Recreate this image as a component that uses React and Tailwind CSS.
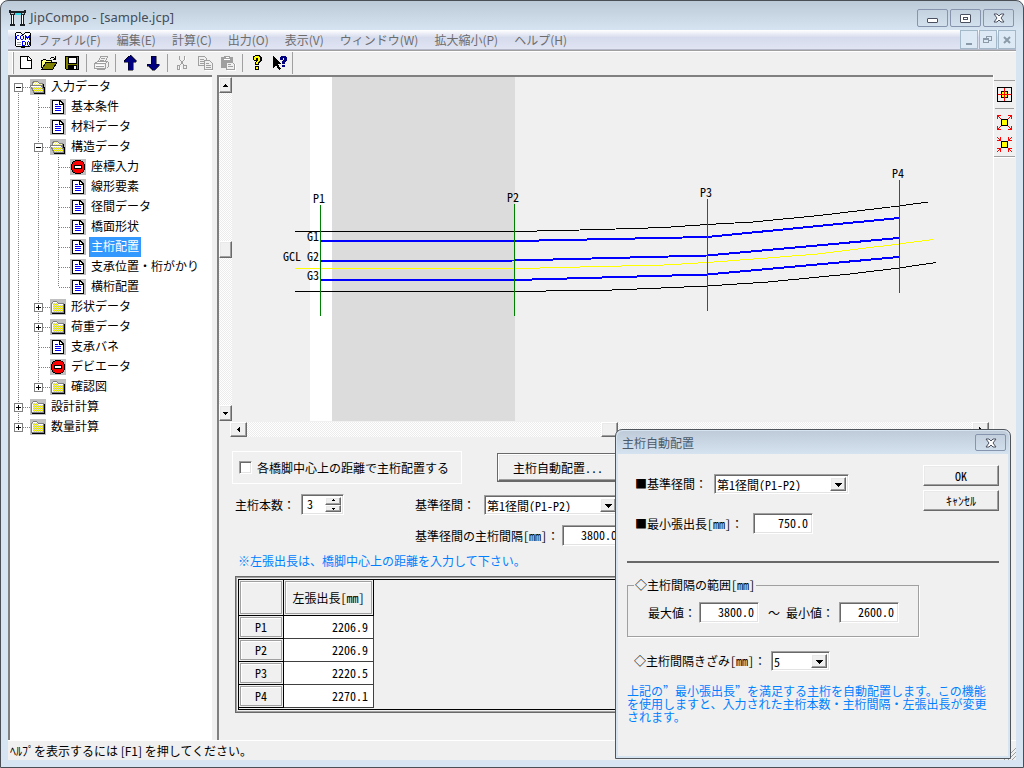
import React, { useState } from "react";

const raised = "border border-t-white border-l-white border-r-[#696969] border-b-[#696969] bg-[#f0f0f0] shadow-[inset_-1px_-1px_#a0a0a0,inset_1px_1px_#e9e9e9]";
const sunken = "border border-t-[#a0a0a0] border-l-[#a0a0a0] border-r-white border-b-white shadow-[inset_1px_1px_#696969,inset_-1px_-1px_#e3e3e3] bg-white";
const track = "bg-[repeating-conic-gradient(#ffffff_0_25%,#ececec_0_50%)] bg-[length:2px_2px]";

const treeRows = [
    { cells: ["box-open-first"], icon: "open", label: "入力データ" },
    { cells: ["v", "t"], icon: "doc", label: "基本条件" },
    { cells: ["v", "t"], icon: "doc", label: "材料データ" },
    { cells: ["v", "box-open"], icon: "open", label: "構造データ" },
    { cells: ["v", "v", "t"], icon: "stop", label: "座標入力" },
    { cells: ["v", "v", "t"], icon: "doc", label: "線形要素" },
    { cells: ["v", "v", "t"], icon: "doc", label: "径間データ" },
    { cells: ["v", "v", "t"], icon: "doc", label: "橋面形状" },
    { cells: ["v", "v", "t"], icon: "doc", label: "主桁配置" },
    { cells: ["v", "v", "t"], icon: "doc", label: "支承位置・桁がかり" },
    { cells: ["v", "v", "l"], icon: "doc", label: "横桁配置" },
    { cells: ["v", "box-closed"], icon: "closed", label: "形状データ" },
    { cells: ["v", "box-closed"], icon: "closed", label: "荷重データ" },
    { cells: ["v", "t"], icon: "doc", label: "支承バネ" },
    { cells: ["v", "t"], icon: "stop", label: "デビエータ" },
    { cells: ["v", "box-closed-last"], icon: "closed", label: "確認図" },
    { cells: ["box-closed"], icon: "closed", label: "設計計算" },
    { cells: ["box-closed-last"], icon: "closed", label: "数量計算" },
];

const menus = ["ファイル(F)", "編集(E)", "計算(C)", "出力(O)", "表示(V)", "ウィンドウ(W)", "拡大縮小(P)", "ヘルプ(H)"];

const piers = [
    { name: "P1", value: "2206.9" },
    { name: "P2", value: "2206.9" },
    { name: "P3", value: "2220.5" },
    { name: "P4", value: "2270.1" },
];

const TreeCell = ({ kind }) => {
    const box = kind.startsWith("box");
    const top = kind !== "box-open-first";
    const bottom = kind !== "l" && !kind.endsWith("last");
    return (
        <svg className="w-5 h-5 shrink-0" viewBox="0 0 20 20" shapeRendering="crispEdges" fill="none" stroke="#808080" strokeDasharray="1 1">
            {top && <path d="M8.5 0V10" />}
            {bottom && <path d="M8.5 10V20" />}
            {kind !== "v" && <path d="M9 10.5H20" />}
            {box && <rect x="4.5" y="6.5" width="8" height="8" fill="#fff" strokeDasharray="none" />}
            {box && <path d="M6 10.5h5" stroke="#000" strokeDasharray="none" />}
            {kind.startsWith("box-closed") && <path d="M8.5 8v5" stroke="#000" strokeDasharray="none" />}
        </svg>
    );
};

const TreeIcon = ({ kind }) => (
    <svg className="w-4 h-4 shrink-0" viewBox="0 0 16 16" shapeRendering="crispEdges">
        <defs>
            <pattern id="dither" width="2" height="2" patternUnits="userSpaceOnUse">
                <rect width="2" height="2" fill="#ffff00" />
                <rect width="1" height="1" fill="#c8c8b0" />
                <rect x="1" y="1" width="1" height="1" fill="#c8c8b0" />
            </pattern>
            <pattern id="ditherLight" width="2" height="2" patternUnits="userSpaceOnUse">
                <rect width="2" height="2" fill="#f4f080" />
                <rect width="1" height="1" fill="#ffffff" />
                <rect x="1" y="1" width="1" height="1" fill="#ffffff" />
            </pattern>
        </defs>
        <rect width="16" height="16" fill="#c0c0c0" />
        {kind === "doc" && (
            <>
                <path d="M2 1h8l4 4v10H2z" fill="#000" />
                <path d="M3 2h6v4h4v8H3z" fill="#fff" />
                <path d="M10 3v2h2v-1h-1v-1z" fill="#fff" />
                <path d="M5 5.5h3M5 7.5h6M5 9.5h6M5 11.5h6" stroke="#0000ff" />
            </>
        )}
        {kind === "closed" && (
            <>
                <path d="M2 14.5h13M14.5 5v10" stroke="#000" />
                <path d="M1 4h1V3h1V2h4v1h1v1h6v10H1z" fill="#808080" />
                <path d="M2 5V4h1V3h4v1h1v1h5v8H2z" fill="url(#dither)" />
                <path d="M2.5 13V4.500M3 3.5h4M8 5.500h5" stroke="#fff" fill="none" />
            </>
        )}
        {kind === "open" && (
            <>
                <path d="M2 6V3h1V2h5v1h1v1h4v3h1v7H4l-1-3z" fill="#808080" />
                <path d="M3 6V4h1V3h4v1h1v1h3v2H3z" fill="url(#ditherLight)" />
                <path d="M0 6h12v2h1v2h1v4H3v-2H2v-2H1V8H0z" fill="#808080" />
                <path d="M1 7h10v1h1v2h1v3H4v-2H3V9H2V8H1z" fill="url(#dither)" />
                <path d="M1 7.5h10" stroke="#fff" />
                <path d="M13.500 5v4M14.500 8v7M4 14.5h11" stroke="#000" />
            </>
        )}
        {kind === "stop" && (
            <>
                <path d="M5 1h6v1h2v1h1v2h1v6h-1v2h-1v1h-2v1H5v-1H3v-1H2v-2H1V5h1V3h1V2h2z" fill="#000" />
                <path d="M5 2h6v1h2v2h1v6h-1v2h-2v1H5v-1H3v-2H2V5h1V3h2z" fill="#ff0000" />
                <rect x="4.500" y="6.500" width="7" height="3" fill="#fff" stroke="#000" />
            </>
        )}
    </svg>
);

const ToolIcon = ({ name }) => (
    <svg className="w-4 h-4" viewBox="0 0 16 16" shapeRendering="crispEdges" fill="none">
        {name === "new" && (
            <>
                <path d="M2.500 1.500h8l3 3v9h-11z" fill="#fff" stroke="#000" />
                <path d="M9.500 2v3.500h4" stroke="#000" />
            </>
        )}
        {name === "open" && (
            <>
                <path d="M1 13V5h1V4h3v1h5v2H5l-3 6z" fill="#ffff80" />
                <path d="M.5 13V5.500h1M1.500 4.500h3M4.500 5.500h6v2" stroke="#000" />
                <path d="M5 7h11l-4 7H1z" fill="#808000" stroke="#000" />
                <path d="M9 3.500h1M10 2.500h3M13 3.500h1M14.500 1v4M12 4.500h3" stroke="#000" />
            </>
        )}
        {name === "save" && (
            <>
                <path d="M1.500 1.500h13v13h-12l-1-1z" fill="#808000" stroke="#000" />
                <path d="M4 2h8v6H4z" fill="#fff" stroke="#000" />
                <path d="M4 10h9v5H4z" fill="#000" />
                <path d="M10 11h2v3h-2z" fill="#fff" />
            </>
        )}
        {name === "print" && (
            <>
                <path d="M5.500 6.500l2-5h7l-2 5M8 3.500h4M7 5.500h4" stroke="#a0a0a0" />
                <path d="M1.500 8.500l3-2h10l1 1v4l-2 2M1.500 8.500h11v5h-11zM12.500 8.500l2-2M3 11.500h8M3.500 14.500h8" stroke="#a0a0a0" />
                <path d="M2 14.500h1M5 7.500h7M3 10.500h8" stroke="#fff" />
            </>
        )}
        {name === "up" && <path d="M8 0h1v1h1v1h1v1h1v1h1v1h1v2h-3v8H6V7H2V5h1V4h1V3h1V2h1V1h2z" fill="#000080" stroke="#000" strokeWidth=".5" />}
        {name === "down" && <path d="M6 1h5v8h3v2h-1v1h-1v1h-1v1h-1v1H7v-1H6v-1H5v-1H4v-1H2V9h4z" fill="#000080" stroke="#000" strokeWidth=".5" />}
        {name === "cut" && (
            <>
                <path d="M5.500 1v3l5 7M10.500 1v3l-5 7" stroke="#a0a0a0" />
                <path d="M3.500 10.500h2v4h-2zM9.500 10.500h3v3h-3z" stroke="#a0a0a0" />
                <path d="M11.500 2v3M6.500 12v3" stroke="#fff" />
            </>
        )}
        {name === "copy" && (
            <>
                <path d="M1.500 1.500h6l2 2v7h-8zM3 4.500h4M3 6.500h4M3 8.500h4" stroke="#a0a0a0" />
                <path d="M7.500 5.500h5l3 3v6h-8z" fill="#f0f0f0" stroke="#a0a0a0" />
                <path d="M9 8.500h3M9 10.500h5M9 12.500h5" stroke="#a0a0a0" />
                <path d="M8 15.500h8" stroke="#fff" />
            </>
        )}
        {name === "paste" && (
            <>
                <path d="M1 2h3V1h6v1h3v11H1z" fill="#a0a0a0" />
                <path d="M4 4.500h6M5.500 2.500h3" stroke="#fff" />
                <path d="M6.500 7.500h6l2 2v5h-8z" fill="#f0f0f0" stroke="#a0a0a0" />
                <path d="M8 9.500h3M8 11.500h5" stroke="#a0a0a0" />
                <path d="M7 15.500h9M15.500 9v6" stroke="#fff" />
            </>
        )}
        {name === "help" && (
            <>
                <path d="M4 1h2V0h5v1h1v1h1v4h-1v1h-1v1h-1v2H6V7h1V6h1V5H8v1H5V5H4z" fill="#000" />
                <path d="M5 2h1V1h4v1h1v4h-1v1H9v2H7V7h1V6h1V3H7v2H5z" fill="#ffff00" />
                <path d="M6 11h4v4H6z" fill="#000" />
                <path d="M7 12h2v2H7z" fill="#ffff00" />
            </>
        )}
        {name === "context" && (
            <>
                <path d="M1 1l8 8H6l3 5-2 1-3-5-3 3z" fill="#000" />
                <path d="M8 2h1V1h5v1h1v4h-1v1h-1v2h-3V6h1V5h1V3h-1v2H8zM10 10h3v2h-3z" fill="#000080" />
            </>
        )}
    </svg>
);

const ToolButton = ({ name, label }) => (
    <button aria-label={label} className="w-[23px] h-[22px] pl-[3px] flex items-center">
        <ToolIcon name={name} />
    </button>
);

const Separator = () => <div className="w-[6px] pl-[2px]"><div className="w-px h-[18px] bg-[#a0a0a0]" /></div>;

const Arrow = ({ d }) => (
    <svg className="w-[7px] h-[7px]" viewBox="0 0 7 7" shapeRendering="crispEdges">
        <path d={d} fill="#000" />
    </svg>
);

const UP = "M3 2h1v1h1v1h1v1H1V4h1V3h1z";
const DOWN = "M1 2h5v1H5v1H4v1H3V4H2V3H1z";
const LEFT = "M4 1h1v5H4V5H3V4H2V3h1V2h1z";
const RIGHT = "M2 1h1v1h1v1h1v1H4v1H3v1H2z";
const DROP = "M0 2h7v1H6v1H5v1H4v1H3V5H2V4H1V3H0z";

// the colon stays full width while the rest of the caption uses half-width latin
const Caption = ({ htmlFor, text, className }) => (
    <label htmlFor={htmlFor} className={"whitespace-nowrap " + className}>
        {text}<span className="[font-feature-settings:normal] [text-spacing-trim:space-all]">：</span>
    </label>
);

const Combo = ({ id, value, className }) => (
    <div className={"flex h-[20px] p-[2px] " + sunken + " " + className}>
        <select id={id} className="appearance-none flex-1 min-w-0 bg-transparent leading-4 outline-none">
            <option>{value}</option>
        </select>
        <span className={"w-4 flex items-center justify-center pointer-events-none " + raised}><Arrow d={DROP} /></span>
    </div>
);

const NumberBox = ({ id, value }) => (
    <input id={id} defaultValue={value} className={"w-[60px] h-[21px] pr-1 pb-[3px] text-right leading-4 outline-none " + sunken} />
);

const CloseGlyph = () => (
    <svg className="w-3 h-[10px]" viewBox="0 0 12 10">
        <path d="M1 1h3l2 2 2-2h3L8 5l3 4H8L6 7 4 9H1l3-4z" fill="#fff" stroke="#4a5060" />
    </svg>
);

const BridgePlan = () => (
    <svg className="w-full h-full" shapeRendering="crispEdges">
        <g transform="translate(-232 -77)" fill="none">
            <rect x="310" y="77" width="22" height="344" fill="#fff" />
            <rect x="332" y="77" width="183" height="344" fill="#dcdcdc" />
            <g stroke="#000">
                <polyline points="295,231.500 515,231.500 560,230.500 600,229.500 664,227.500 707,224.500 753,222 819,215.500 899,206 928,202" />
                <polyline points="295,291.500 515,291.500 566,290.700 600,290.500 650,288.500 707,286 768,282 850,274 899,268 936,262.500" />
            </g>
            <polyline stroke="#ffff00" points="295,268.500 520,268.500 600,266.500 664,265 707,262.500 780,257 817,254 899,244 933,239.500" />
            <g stroke="#0000ff" strokeWidth="2">
                <polyline points="321,241 515,241 707,237 899,218" />
                <polyline points="321,261 515,260.500 707,255.500 899,238" />
                <polyline points="321,280 515,280 707,274.500 899,257" />
            </g>
            <path d="M320.500 205V316M514.500 204V316M707.500 199V311M899.500 180V293" stroke="#008000" />
            <g fill="#000" className="text-[12px]">
                <text x="313" y="203">P1</text>
                <text x="507" y="202">P2</text>
                <text x="700" y="197">P3</text>
                <text x="892" y="178">P4</text>
                <text x="307" y="241">G1</text>
                <text x="283" y="261">GCL</text>
                <text x="307" y="261">G2</text>
                <text x="307" y="280">G3</text>
            </g>
        </g>
    </svg>
);

const AutoDialog = () => (
    <section className="absolute left-[614px] top-[428px] w-[396px] rounded-t-[7px] border border-[#50555c] bg-[#d6e3f0] p-px">
        <header className="flex items-center justify-between h-[23px] pl-[5px] pr-[3px] rounded-t-[6px] bg-linear-to-b from-[#bfcbd8] to-[#d5e2ef] text-[12px] text-[#4c5b6b]">
            <h2>主桁自動配置</h2>
            <button aria-label="閉じる" className="w-[31px] h-[17px] rounded-[2px] border border-[#8694ad] flex items-center justify-center"><CloseGlyph /></button>
        </header>
        <div className="mx-px mb-px bg-[#f0f0f0] px-[9px] pt-[11px] pb-[33px]">
            <div className="flex justify-between">
                <div className="flex flex-col gap-[19px] pl-2 pt-[9px]">
                    <div className="flex items-center">
                        <Caption htmlFor="dlgSpan" text="■基準径間" className="w-[79px]" />
                        <Combo id="dlgSpan" value="第1径間(P1-P2)" className="w-[135px]" />
                    </div>
                    <div className="flex items-center">
                        <Caption htmlFor="dlgMin" text="■最小張出長[mm]" className="w-[118px]" />
                        <NumberBox id="dlgMin" value="750.0" />
                    </div>
                </div>
                <div className="flex flex-col gap-1">
                    <button className={"w-[76px] h-[21px] leading-4 " + raised}>OK</button>
                    <button className={"w-[76px] h-[21px] leading-4 " + raised}>ｷｬﾝｾﾙ</button>
                </div>
            </div>
            <hr className="mt-[27px] border-0 h-[2px] bg-[#696969]" />
            <fieldset className="mt-[13px] mr-[80px] h-[61px] border border-[#a0a0a0] px-[6px] shadow-[1px_1px_#fff]">
                <legend className="px-px leading-[18px]">◇主桁間隔の範囲[mm]</legend>
                <div className="flex items-center pl-[14px] pt-2">
                    <Caption htmlFor="rangeMax" text="最大値" className="w-[51px]" />
                    <NumberBox id="rangeMax" value="3800.0" />
                    <span className="w-[27px] pl-[9px] [font-feature-settings:normal]">～</span>
                    <Caption htmlFor="rangeMin" text="最小値" className="w-[53px]" />
                    <NumberBox id="rangeMin" value="2600.0" />
                </div>
            </fieldset>
            <div className="flex items-center mt-[14px] pl-[7px]">
                <Caption htmlFor="step" text="◇主桁間隔きざみ[mm]" className="w-[137px]" />
                <Combo id="step" value="5" className="w-[59px]" />
            </div>
            <p className="mt-[13px] leading-[13px] whitespace-nowrap text-[#0080ff] [font-feature-settings:'fwid'] [text-spacing-trim:space-all]">
                上記の”最小張出長”を満足する主桁を自動配置します。この機能<br />
                を使用しますと、入力された主桁本数・主桁間隔・左張出長が変更<br />
                されます。
            </p>
        </div>
    </section>
);

const App = () => {
    const [selected, setSelected] = useState("主桁配置");
    const mdiButton = "w-[18px] h-[19px] border border-[#a3b8c8] bg-[#dde9f5] flex items-center justify-center";
    const winButton = "w-[31px] h-[18px] rounded-[2px] border border-[#8694ad] flex items-center justify-center";
    return (
        <div className="relative min-h-screen flex flex-col overflow-hidden rounded-t-[8px] border border-[#4a4f56] bg-[#d7e4f2] px-[7px] pb-[7px] text-[12px] text-black font-['Noto_Sans_CJK_JP',sans-serif] bg-linear-to-b from-[#bccad8] from-0% to-[#d7e4f2] to-[30px] [font-feature-settings:'hwid']" lang="ja">
            <header className="flex items-center h-[29px] pt-[5px] pl-px pr-[2px]">
                <svg className="w-[17px] h-4" viewBox="0 0 17 16" shapeRendering="crispEdges">
                    <path d="M0 0h2v1h13V0h2v3h-1v2h-1v9h1v2h-5v-2h1V5H5v9h1v2H1v-2h1V5H1V3H0z" fill="#1c2024" />
                    <path d="M3 5h1v9H3zM13 5h1v9h-1z" fill="#fff" />
                    <path d="M6 3h6v2H6z" fill="#30d8e8" />
                    <path d="M2 3h3v1H2zM13 3h2v1h-2z" fill="#b8c0c8" />
                </svg>
                <h1 className="flex-1 pl-1 text-[13px] text-[#434e5a] font-['Noto_Sans',sans-serif] [font-feature-settings:normal]">JipCompo - [sample.jcp]</h1>
                <div className="flex gap-[2px]">
                    <button aria-label="最小化" className={winButton}><span className="w-[11px] h-[5px] rounded-[1px] border border-[#4a5060] bg-white mt-1" /></button>
                    <button aria-label="最大化" className={winButton}><span className="w-[11px] h-[9px] rounded-[1px] border border-[#4a5060] bg-white flex items-center justify-center"><span className="w-[5px] h-[3px] border border-[#4a5060]" /></span></button>
                    <button aria-label="閉じる" className={winButton}><CloseGlyph /></button>
                </div>
            </header>

            <nav className="flex items-center h-5 pl-[7px] bg-linear-to-b from-white via-[#d6dbed] via-40% to-[#e0e4f3] border-b border-[#b4b8c8] text-[#6d6d6d] [font-feature-settings:normal]">
                <svg className="w-4 h-4" viewBox="0 0 16 16" shapeRendering="crispEdges" fill="none">
                    <path d="M1 0h5v1h1v1h2V1h1V0h5v1h1v13h-1v1h-5v1H6v-1H1v-1H0V1h1z" fill="#000" />
                    <path d="M1 1h5v1h1v1h2V2h1V1h5v13H1z" fill="#fff" />
                    <path d="M4 3.500H2M1.500 4v3M2 7.500h2M6 3.500h2M5.500 4v3M8.500 4v3M6 7.500h2" stroke="#0000ff" />
                    <path d="M10.500 8V3M11.500 4v2M12.500 5v2M13.500 4v2M14.500 3v5" stroke="#0000ff" />
                    <path d="M7.500 9v5M8 9.500h2M8 13.500h2M10.500 10v3M14 9.500h-1M12.500 10v3M14.500 10v3M13 13.500h1" stroke="#0000ff" />
                    <path d="M2 10.500h4M2 12.500h4" stroke="#a0a0a0" />
                </svg>
                <ul className="flex flex-1 gap-4 pl-[7px]">
                    {menus.map((m) => <li key={m}><button className="leading-4">{m}</button></li>)}
                </ul>
                <div className="flex gap-px">
                    <button aria-label="ウィンドウを最小化" className={mdiButton}><span className="w-[6px] h-[2px] mt-2 bg-[#8a9aa8]" /></button>
                    <button aria-label="元に戻す" className={mdiButton}>
                        <svg className="w-[10px] h-[9px]" viewBox="0 0 10 9" shapeRendering="crispEdges" fill="none" stroke="#8a9aa8"><path d="M3.500 3V1h5v4H6M3 1.500h5M.5 3.500h5v4h-5zM.5 4.500h5" /></svg>
                    </button>
                    <button aria-label="ウィンドウを閉じる" className={mdiButton}>
                        <svg className="w-2 h-2" viewBox="0 0 8 8" stroke="#8a9aa8" strokeWidth="2"><path d="M1 1l6 6M7 1L1 7" /></svg>
                    </button>
                </div>
            </nav>

            <div className="flex items-center h-[25px] pl-1 border-t border-[#a0a0a0] bg-[#f0f0f0] shadow-[inset_0_1px_#fff]">
                <div className="w-[2px] h-[22px] mr-px border-l border-l-white border-r border-r-[#a0a0a0]" />
                <ToolButton name="new" label="新規作成" />
                <ToolButton name="open" label="開く" />
                <ToolButton name="save" label="保存" />
                <Separator />
                <ToolButton name="print" label="印刷" />
                <Separator />
                <ToolButton name="up" label="前へ" />
                <ToolButton name="down" label="次へ" />
                <Separator />
                <ToolButton name="cut" label="切り取り" />
                <ToolButton name="copy" label="コピー" />
                <ToolButton name="paste" label="貼り付け" />
                <Separator />
                <ToolButton name="help" label="ヘルプ" />
                <ToolButton name="context" label="ポップヒント" />
                <div className="w-px h-[22px] bg-[#a0a0a0]" />
            </div>

            <main className="flex flex-1 bg-[#f0f0f0]">
                <ul className="w-[204px] mr-[5px] shrink-0 border-t-2 border-l-2 border-[#808080] bg-white">
                    {treeRows.map((row) => (
                        <li key={row.label} className="flex h-5">
                            {row.cells.map((kind, i) => <TreeCell key={i} kind={kind} />)}
                            <span className="pt-[2px]"><TreeIcon kind={row.icon} /></span>
                            <button
                                onClick={() => setSelected(row.label)}
                                className={"ml-[3px] px-[2px] h-5 pb-[2px] leading-[18px] whitespace-nowrap " + (selected === row.label ? "bg-[#3399ff] text-white" : "")}
                            >
                                {row.label}
                            </button>
                        </li>
                    ))}
                </ul>

                <div className="flex-1 min-w-0 border-t-2 border-l-2 border-[#808080]">
                    <div className="flex h-[344px]">
                        <div className={"w-[13px] shrink-0 flex flex-col " + track}>
                            <button aria-label="上へスクロール" className={"h-4 flex items-center justify-center " + raised}><Arrow d={UP} /></button>
                            <div className="flex-1" />
                            <div className={"h-[17px] " + raised} />
                            <div className="flex-1" />
                            <button aria-label="下へスクロール" className={"h-4 flex items-center justify-center " + raised}><Arrow d={DOWN} /></button>
                        </div>
                        <div className="flex-1 min-w-0 overflow-hidden"><BridgePlan /></div>
                    </div>
                    <div className={"flex h-[15px] mt-px ml-[11px] mr-1 " + track}>
                        <button aria-label="左へスクロール" className={"w-[17px] flex items-center justify-center " + raised}><Arrow d={LEFT} /></button>
                        <div className="flex-1" />
                        <div className={"w-[17px] " + raised} />
                        <div className="flex-1" />
                        <button aria-label="右へスクロール" className={"w-[17px] flex items-center justify-center " + raised}><Arrow d={RIGHT} /></button>
                    </div>

                    <form className="pl-[13px] pt-[14px]" onSubmit={(e) => e.preventDefault()}>
                        <div className="flex items-center">
                            <label className="flex items-center w-[230px] h-[33px] pl-[6px] border border-white">
                                <input type="checkbox" className={"appearance-none w-[13px] h-[13px] mr-[5px] " + sunken} />
                                各橋脚中心上の距離で主桁配置する
                            </label>
                            <button className="ml-[35px] w-[122px] h-[29px] border border-[#696969]"><span className={"flex h-full items-center justify-center " + raised}>主桁自動配置...</span></button>
                        </div>
                        <div className="flex pl-[3px] pt-[10px]">
                            <div className="flex w-[180px]">
                                <Caption htmlFor="count" text="主桁本数" className="w-[66px] leading-[22px]" />
                                <div className={"flex w-[43px] h-[21px] p-[2px] " + sunken}>
                                    <input id="count" defaultValue="3" className="flex-1 min-w-0 pl-[3px] pb-[2px] leading-4 outline-none" />
                                    <div className="w-4 flex flex-col">
                                        <button aria-label="増やす" className={"flex-1 min-h-0 flex items-center justify-center " + raised}><Arrow d={"M3 2h1v1h1v1H2V3h1z"} /></button>
                                        <button aria-label="減らす" className={"flex-1 min-h-0 flex items-center justify-center " + raised}><Arrow d={"M2 3h3v1H4v1H3V4H2z"} /></button>
                                    </div>
                                </div>
                            </div>
                            <div className="flex flex-col gap-[9px]">
                                <div className="flex items-center h-[22px]">
                                    <Caption htmlFor="span" text="基準径間" className="w-[69px]" />
                                    <Combo id="span" value="第1径間(P1-P2)" className="w-[135px]" />
                                </div>
                                <div className="flex items-center">
                                    <Caption htmlFor="pitch" text="基準径間の主桁間隔[mm]" className="w-[147px]" />
                                    <NumberBox id="pitch" value="3800.0" />
                                </div>
                            </div>
                        </div>
                        <p className="pl-[6px] pt-[5px] leading-5 text-[#0080ff] [text-spacing-trim:space-all]">※左張出長は、橋脚中心上の距離を入力して下さい。</p>
                        <div className="mt-[5px] ml-[3px] mr-4 p-[2px] border border-[#696969] shadow-[inset_1px_1px_#a0a0a0,inset_-1px_-1px_#a0a0a0]">
                            <div className="border border-black pb-px">
                                <table className="border-separate border-spacing-0 [&_th]:font-normal [&_th]:p-px">
                                    <thead>
                                        <tr className="h-9">
                                            <th className="w-[45px] border-r border-b border-black"><div className="h-[33px] border border-[#a0a0a0] shadow-[inset_1px_1px_#fff]" /></th>
                                            <th className="w-[90px] border-r border-b border-black"><div className="h-[33px] leading-[32px] border border-[#a0a0a0] shadow-[inset_1px_1px_#fff]">左張出長[mm]</div></th>
                                        </tr>
                                    </thead>
                                    <tbody>
                                        {piers.map((p) => (
                                            <tr key={p.name} className="h-[23px]">
                                                <th scope="row" className="border-r border-b border-black"><div className="h-5 leading-[18px] border border-[#a0a0a0] shadow-[inset_1px_1px_#fff]">{p.name}</div></th>
                                                <td className="border-r border-b border-[#404040] bg-white text-right pr-[5px] leading-5">{p.value}</td>
                                            </tr>
                                        ))}
                                    </tbody>
                                </table>
                            </div>
                        </div>
                    </form>
                </div>

                <aside className="w-[23px] pr-px shrink-0 border-l border-white">
                    <div className="flex flex-col items-center mt-[5px] pt-[6px] h-[77px] border-t border-b border-[#a0a0a0] shadow-[0_1px_#fff]">
                        <button aria-label="全体表示">
                            <svg className="block w-[15px] h-[15px]" viewBox="0 0 15 15" shapeRendering="crispEdges" fill="none" stroke="#000">
                                <path d="M.5.5h14v14H.5z" />
                                <path d="M4.500 4.500h6v6h-6z" fill="#ffff00" />
                                <path d="M7.500 1v13M1 7.500h13" stroke="#ff0000" />
                            </svg>
                        </button>
                        <div className="w-[19px] h-px mt-[6px] bg-[#a0a0a0]" />
                        <button aria-label="拡大" className="mt-[6px]">
                            <svg className="block w-[15px] h-[15px]" viewBox="0 0 15 15" shapeRendering="crispEdges" fill="none">
                                <path d="M0 .5h4M.5 0v4M1 1l3 3M11 .5h4M14.500 0v4M14 1l-3 3M0 14.500h4M.5 11v4M1 14l3-3M11 14.500h4M14.500 11v4M14 14l-3-3" stroke="#ff0000" />
                                <path d="M4.500 4.500h6v6h-6z" fill="#ffff00" stroke="#000" />
                            </svg>
                        </button>
                        <button aria-label="縮小" className="mt-[7px]">
                            <svg className="block w-[15px] h-[15px]" viewBox="0 0 15 15" shapeRendering="crispEdges" fill="none">
                                <path d="M0 3.500h4M3.500 0v4M0 0l4 4M11 3.500h4M11.500 0v4M15 0l-4 4M0 11.500h4M3.500 11v4M0 15l4-4M11 11.500h4M11.500 11v4M15 15l-4-4" stroke="#ff0000" />
                                <path d="M4.500 4.500h6v6h-6z" fill="#ffff00" stroke="#000" />
                            </svg>
                        </button>
                    </div>
                </aside>
            </main>

            <footer className="flex items-center justify-between h-5 pl-[2px] border-t border-white bg-[#f0f0f0] [font-feature-settings:normal]">
                <span>ﾍﾙﾌﾟを表示するには [F1] を押してください。</span>
                <svg className="w-3 h-3 self-end" viewBox="0 0 12 12" stroke="#a0a0a0" fill="none"><path d="M0 12L12 0M4 12l8-8M8 12l4-4" /></svg>
            </footer>

            <AutoDialog />
        </div>
    );
};

export default App;
